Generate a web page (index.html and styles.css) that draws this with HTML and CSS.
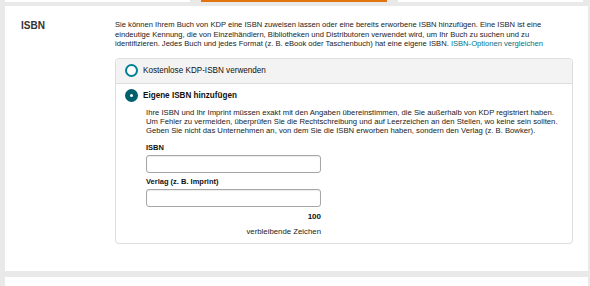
FILE: index.html
```html
<!DOCTYPE html>
<html lang="de">
<head>
    <meta charset="UTF-8">
    <meta name="viewport" content="width=device-width, initial-scale=1.0">
    <title>ISBN</title>
    <link rel="stylesheet" href="styles.css">
</head>
<body>

<div class="steps">
    <div class="step"></div>
    <div class="step active"></div>
    <div class="step"></div>
</div>

<section class="panel">
    <h2 class="section-title">ISBN</h2>
    <div class="section-body">
        <p class="intro">
            Sie können Ihrem Buch von KDP eine ISBN zuweisen lassen oder eine bereits erworbene ISBN hinzufügen. Eine ISBN ist eine
            eindeutige Kennung, die von Einzelhändlern, Bibliotheken und Distributoren verwendet wird, um Ihr Buch zu suchen und zu
            identifizieren. Jedes Buch und jedes Format (z. B. eBook oder Taschenbuch) hat eine eigene ISBN.
            <a href="#">ISBN-Optionen vergleichen</a>
        </p>

        <div class="options">
            <label class="option option-head">
                <span class="radio"></span>
                <span class="option-label">Kostenlose KDP-ISBN verwenden</span>
            </label>
            <div class="option option-open">
                <label class="option-row">
                    <span class="radio checked"></span>
                    <span class="option-label strong">Eigene ISBN hinzufügen</span>
                </label>
                <div class="option-content">
                    <p class="hint">
                        Ihre ISBN und Ihr Imprint müssen exakt mit den Angaben übereinstimmen, die Sie außerhalb von KDP registriert haben.
                        Um Fehler zu vermeiden, überprüfen Sie die Rechtschreibung und auf Leerzeichen an den Stellen, wo keine sein sollten.
                        Geben Sie nicht das Unternehmen an, von dem Sie die ISBN erworben haben, sondern den Verlag (z. B. Bowker).
                    </p>
                    <div class="fields">
                        <label class="field-label" for="isbn">ISBN</label>
                        <input class="field" id="isbn" type="text">
                        <label class="field-label" for="imprint">Verlag (z. B. Imprint)</label>
                        <input class="field" id="imprint" type="text">
                        <div class="counter">100</div>
                        <div class="counter-note">verbleibende Zeichen</div>
                    </div>
                </div>
            </div>
        </div>
    </div>
</section>

<section class="panel next"></section>

</body>
</html>
```

FILE: styles.css
```css
body {
    margin: 0;
    background-color: #e9e9e9;
    font-family: "Liberation Sans", Arial, sans-serif;
    color: #222;
}

.steps {
    display: flex;
    gap: 11px;
    height: 2px;
    margin: 0 7px 4px 5px;
    overflow: hidden;
}

.step {
    flex: 1;
    background-color: #fff;
}

.step.active {
    border-bottom: 2px solid #e3740d;
    box-sizing: border-box;
}

.panel {
    display: grid;
    grid-template-columns: 94px 1fr;
    margin: 0 2px 6px 5px;
    padding: 14px 15px 27px 16px;
    background-color: #fff;
}

.panel.next {
    min-height: 11px;
    margin-bottom: 0;
    padding: 0;
}

.section-title {
    margin: 0;
    font-size: 10px;
    line-height: 12px;
    font-weight: bold;
    color: #333;
}

.intro {
    margin: 0;
    font-size: 7.6px;
    line-height: 9.6px;
}

.intro a {
    color: #007185;
    text-decoration: none;
}

.options {
    margin-top: 9px;
    border: 1px solid #ddd;
    border-radius: 4px;
}

.option {
    display: block;
}

.option-head,
.option-row {
    display: flex;
    align-items: center;
    gap: 5px;
}

.option-head {
    height: 24px;
    padding-left: 9px;
    background-color: #f3f3f3;
    border-bottom: 1px solid #ddd;
    border-radius: 4px 4px 0 0;
}

.option-open {
    padding: 6px 0 7px 9px;
}

.option-row {
    height: 12px;
}

.radio {
    width: 9px;
    height: 9px;
    border: 2px solid #008296;
    border-radius: 50%;
    background-color: #fff;
}

.radio.checked {
    width: 3px;
    height: 3px;
    border: 5px solid #01606e;
}

.option-label {
    font-size: 8.15px;
    color: #111;
}

.option-label.strong {
    font-weight: bold;
}

.option-content {
    padding: 0 14px 0 21px;
}

.hint {
    margin: 6px 0 0;
    font-size: 7.7px;
    line-height: 9px;
}

.fields {
    display: flex;
    flex-direction: column;
    width: 175px;
    margin-top: 8px;
}

.field-label {
    font-size: 7.5px;
    line-height: 9px;
    font-weight: bold;
    color: #111;
}

.field {
    height: 18px;
    margin: 3px 0 4px;
    box-sizing: border-box;
    border: 1px solid #a6a6a6;
    border-radius: 3px;
    box-shadow: inset 0 1px 1px rgba(0, 0, 0, 0.08);
}

.counter {
    margin-top: 1px;
    text-align: right;
    font-size: 8px;
    line-height: 9px;
    font-weight: bold;
    color: #111;
}

.counter-note {
    margin-top: 6px;
    text-align: right;
    font-size: 7.8px;
    line-height: 9px;
}
```
